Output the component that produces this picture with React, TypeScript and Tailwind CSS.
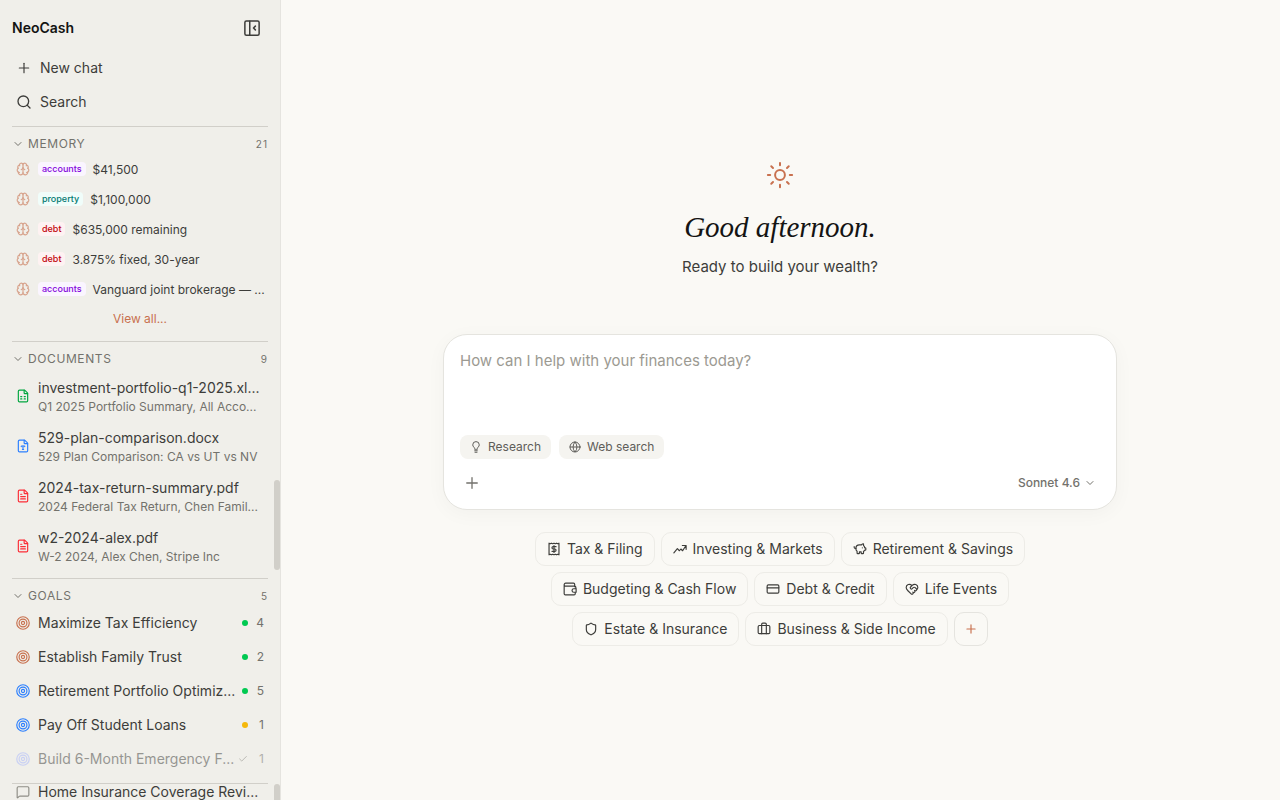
import type { ReactNode } from "react";
import {
  Brain,
  Briefcase,
  Check,
  ChevronDown,
  CreditCard,
  FileSpreadsheet,
  FileText,
  FileType,
  Globe,
  HeartHandshake,
  MessageSquare,
  PiggyBank,
  Plus,
  Search,
  Shield,
} from "lucide-react";

const Glyph = ({ size = 14, stroke = 2, className = "", children }: { size?: number; stroke?: number; className?: string; children: ReactNode }) => (
  <svg
    width={size}
    height={size}
    viewBox="0 0 24 24"
    fill="none"
    stroke="currentColor"
    strokeWidth={stroke}
    strokeLinecap="round"
    strokeLinejoin="round"
    className={`shrink-0 ${className}`}
    aria-hidden="true"
  >
    {children}
  </svg>
);

const PanelIcon = () => (
  <Glyph size={18}>
    <rect x="2.5" y="2.5" width="19" height="19" rx="2" />
    <path d="M9 3v18M16.5 9.5 14 12l2.5 2.5" />
  </Glyph>
);

const SunIcon = () => (
  <Glyph size={28} stroke={1.7} className="text-[#c8714f]">
    <circle cx="12" cy="12" r="4.2" />
    <path d="M12 1.6v2M12 20.4v2M1.6 12h2M20.4 12h2M4.5 4.5 6 6M18 18l1.5 1.5M4.5 19.5 6 18M18 6l1.5-1.5" />
  </Glyph>
);

const TargetIcon = ({ className }: { className: string }) => (
  <Glyph className={className}>
    <circle cx="12" cy="12" r="10.7" />
    <circle cx="12" cy="12" r="6.7" />
    <circle cx="12" cy="12" r="2.7" />
  </Glyph>
);

const BulbIcon = () => (
  <Glyph size={12}>
    <path d="M9.2 14.5c0-2-3.7-3-3.7-6.8a6.5 6.5 0 0 1 13 0c0 3.800-3.700 4.800-3.700 6.800M9.500 16.500h5M9.500 19.500h5M10 22.500h4" />
  </Glyph>
);

const ReceiptIcon = () => (
  <Glyph>
    <path d="M3.500 2l2 1 2-1 2.200 1L12 2l2.300 1 2.200-1 2 1 2-1v20l-2-1-2 1-2.200-1-2.300 1-2.300-1-2.200 1-2-1-2 1z" />
    <path d="M15.500 8h-5a2 2 0 0 0 0 4h3a2 2 0 0 1 0 4h-5M12 6v12" />
  </Glyph>
);

const TrendIcon = () => (
  <Glyph>
    <path d="m1.500 18.500 6-7 3.500 3.500 2.500-3 3 3 5.500-8.500M16 6h6.500v6.500" />
  </Glyph>
);

const WalletIcon = () => (
  <Glyph>
    <path d="M20 8V4a2 2 0 0 0-2-2H4.500a2.500 2.500 0 0 0 0 5H20a2 2 0 0 1 2 2v2M2 4.500V20a2 2 0 0 0 2 2h15a2 2 0 0 0 2-2v-2" />
    <path d="M22.500 11.500h-4a3 3 0 0 0 0 6h4z" />
  </Glyph>
);

const memories = [
  { tag: "accounts", style: "bg-purple-50 text-purple-700", text: "$41,500" },
  { tag: "property", style: "bg-teal-50 text-teal-700", text: "$1,100,000" },
  { tag: "debt", style: "bg-red-50 text-red-700", text: "$635,000 remaining" },
  { tag: "debt", style: "bg-red-50 text-red-700", text: "3.875% fixed, 30-year" },
  { tag: "accounts", style: "bg-purple-50 text-purple-700", text: "Vanguard joint brokerage — ..." },
];

const documents = [
  { icon: FileSpreadsheet, color: "text-green-600", name: "investment-portfolio-q1-2025.xl...", detail: "Q1 2025 Portfolio Summary, All Acco..." },
  { icon: FileType, color: "text-blue-500", name: "529-plan-comparison.docx", detail: "529 Plan Comparison: CA vs UT vs NV" },
  { icon: FileText, color: "text-red-500", name: "2024-tax-return-summary.pdf", detail: "2024 Federal Tax Return, Chen Famil..." },
  { icon: FileText, color: "text-red-500", name: "w2-2024-alex.pdf", detail: "W-2 2024, Alex Chen, Stripe Inc" },
];

const goals = [
  { name: "Maximize Tax Efficiency", color: "text-[#c8714f]", dot: "bg-green-500", count: 4 },
  { name: "Establish Family Trust", color: "text-[#c8714f]", dot: "bg-green-500", count: 2 },
  { name: "Retirement Portfolio Optimiz...", color: "text-blue-500", dot: "bg-green-500", count: 5 },
  { name: "Pay Off Student Loans", color: "text-blue-500", dot: "bg-[#f5b80b]", count: 1 },
  { name: "Build 6-Month Emergency F...", color: "text-indigo-300", dot: "", count: 1, done: true },
];

const topics = [
  [
    { icon: <ReceiptIcon />, label: "Tax & Filing" },
    { icon: <TrendIcon />, label: "Investing & Markets" },
    { icon: <PiggyBank size={14} />, label: "Retirement & Savings" },
  ],
  [
    { icon: <WalletIcon />, label: "Budgeting & Cash Flow" },
    { icon: <CreditCard size={14} />, label: "Debt & Credit" },
    { icon: <HeartHandshake size={14} />, label: "Life Events" },
  ],
  [
    { icon: <Shield size={14} />, label: "Estate & Insurance" },
    { icon: <Briefcase size={14} />, label: "Business & Side Income" },
  ],
];

const SectionHeader = ({ title, count }: { title: string; count: number }) => (
  <button className="flex h-[34px] w-full items-center gap-1 text-[#73726c]">
    <ChevronDown size={12} />
    <span className="text-xs tracking-wider uppercase">{title}</span>
    <span className="ml-auto text-[10px] tracking-widest">{count}</span>
  </button>
);

const Sidebar = () => (
  <aside className="relative -mr-px flex w-[281px] shrink-0 flex-col overflow-hidden border-r border-[#e5e4df] bg-[#f0efea] px-3">
    <div className="flex h-14 shrink-0 items-center justify-between pr-[7px]">
      <span className="text-sm font-semibold text-[#141413]">NeoCash</span>
      <button aria-label="Close sidebar" className="text-[#3d3d3a]">
        <PanelIcon />
      </button>
    </div>

    <nav className="-mt-[5px] shrink-0 pb-[7px]">
      <button className="flex h-[34px] w-full items-center gap-2 px-1 text-sm">
        <Plus size={16} strokeWidth={1.75} />
        New chat
      </button>
      <button className="flex h-[34px] w-full items-center gap-2 px-1 text-sm">
        <Search size={16} />
        Search
      </button>
    </nav>

    <section className="shrink-0 border-t border-[#d1cfc9] pb-[7px]">
      <SectionHeader title="Memory" count={21} />
      <ul className="-mt-[7px]">
        {memories.map((memory) => (
          <li key={memory.text}>
            <button className="flex h-[30px] w-full items-center gap-2 px-1 text-xs">
              <Brain size={14} className="shrink-0 text-[#c8714f] opacity-60" />
              <span className={`rounded px-1 text-[9px] leading-[14px] font-medium ${memory.style}`}>{memory.tag}</span>
              <span className="-ml-px pt-px whitespace-nowrap">{memory.text}</span>
            </button>
          </li>
        ))}
      </ul>
      <a href="#" className="flex h-[30px] items-center justify-center text-xs text-[#c8714f]">
        View all...
      </a>
    </section>

    <section className="shrink-0 border-t border-[#d1cfc9] pb-[7px]">
      <SectionHeader title="Documents" count={9} />
      <ul className="-mt-[5px]">
        {documents.map(({ icon: Icon, color, name, detail }) => (
          <li key={name}>
            <button className="flex h-[50px] w-full items-center gap-2 pl-1 text-left">
              <Icon size={14} className={`shrink-0 ${color}`} />
              <span className="pt-[2px] whitespace-nowrap">
                <span className="block text-sm leading-5">{name}</span>
                <span className="block text-xs leading-[18px] text-[#73726c]">{detail}</span>
              </span>
            </button>
          </li>
        ))}
      </ul>
    </section>

    <section className="shrink-0 border-t border-[#d1cfc9] pb-[7px]">
      <SectionHeader title="Goals" count={5} />
      <ul className="-mt-[7px]">
        {goals.map((goal) => (
          <li key={goal.name}>
            <button className={`flex h-[34px] w-full items-center px-1 text-sm ${goal.done ? "opacity-50" : ""}`}>
              <TargetIcon className={goal.color} />
              <span className="ml-2 flex-1 text-left whitespace-nowrap">{goal.name}</span>
              {goal.done ? (
                <Check size={10} className="shrink-0 text-[#73726c]" />
              ) : (
                <span className={`size-1.5 shrink-0 rounded-full ${goal.dot}`} />
              )}
              <span className="w-4 text-right text-xs text-[#73726c]">{goal.count}</span>
            </button>
          </li>
        ))}
      </ul>
    </section>

    <section className="flex min-h-0 flex-1 items-center overflow-hidden border-t border-[#d1cfc9]">
      <button className="flex w-full items-center gap-2 pl-1 text-sm">
        <MessageSquare size={14} className="shrink-0 text-[#8f8e87]" />
        <span className="leading-4 whitespace-nowrap">Home Insurance Coverage Revi...</span>
      </button>
    </section>

    {/* Scroll thumbs */}
    <div className="absolute top-[480px] right-0 h-[90px] w-1.5 rounded-full bg-[#d1cfc9]" />
    <div className="absolute right-0 bottom-0 h-4 w-1.5 rounded-t-full bg-[#d1cfc9]" />
  </aside>
);

const Composer = () => (
  <form className="w-full max-w-[674px] rounded-3xl border border-[#e5e4df] bg-white px-4 pt-4 pb-[10px] shadow-[0_4px_20px_rgba(0,0,0,0.035)]">
    <textarea
      aria-label="Message"
      placeholder="How can I help with your finances today?"
      className="block h-[84px] w-full resize-none text-[15px] leading-5 outline-none placeholder:text-[#9c9a92]"
    />
    <div className="flex gap-2 text-xs text-[#5e5d59]">
      <button type="button" className="flex h-6 items-center gap-1.5 rounded-lg bg-[#f5f4f0] px-2.5">
        <BulbIcon />
        Research
      </button>
      <button type="button" className="flex h-6 items-center gap-1.5 rounded-lg bg-[#f5f4f0] px-2.5">
        <Globe size={12} />
        Web search
      </button>
    </div>
    <div className="mt-2 flex h-8 items-center justify-between text-[#73726c]">
      <button type="button" aria-label="Add attachment" className="px-[3px]">
        <Plus size={18} strokeWidth={1.75} />
      </button>
      <button type="button" className="flex items-center gap-1 px-1 text-xs font-medium">
        Sonnet 4.6
        <ChevronDown size={12} />
      </button>
    </div>
  </form>
);

export default function App() {
  return (
    <div className="flex h-screen bg-[#faf9f5] font-['Inter','Liberation_Sans',sans-serif] text-[#3d3d3a]">
      <Sidebar />
      <main className="flex min-w-0 flex-1 flex-col items-center justify-center px-6 pt-[7px]">
        <SunIcon />
        <h1 className="mt-[18px] font-['Liberation_Serif',serif] text-[29px] leading-10 text-[#141413] italic">Good afternoon.</h1>
        <p className="mt-2 text-[15px] leading-6">Ready to build your wealth?</p>
        <div className="mt-[55px] flex w-full justify-center">
          <Composer />
        </div>
        <div className="mt-[22px] flex flex-col gap-1.5">
          {topics.map((row, index) => (
            <div key={index} className="flex flex-wrap justify-center gap-1.5">
              {row.map((topic) => (
                <button key={topic.label} className="flex h-[34px] items-center gap-1.5 rounded-[10px] border border-[#edece7] px-[11px] text-sm">
                  {topic.icon}
                  {topic.label}
                </button>
              ))}
              {index === topics.length - 1 && (
                <button aria-label="Add topic" className="flex size-[34px] items-center justify-center rounded-[10px] border border-[#e5e4df] text-[#c8714f]">
                  <Plus size={14} />
                </button>
              )}
            </div>
          ))}
        </div>
      </main>
    </div>
  );
}
